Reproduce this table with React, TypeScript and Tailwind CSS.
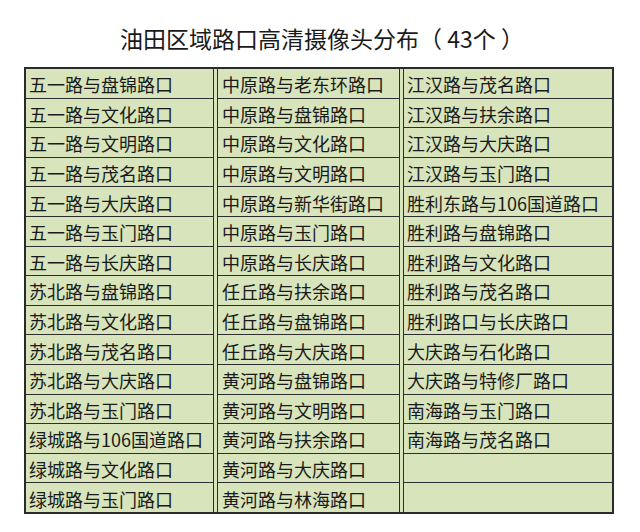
const columns: string[][] = [
  [
    '五一路与盘锦路口',
    '五一路与文化路口',
    '五一路与文明路口',
    '五一路与茂名路口',
    '五一路与大庆路口',
    '五一路与玉门路口',
    '五一路与长庆路口',
    '苏北路与盘锦路口',
    '苏北路与文化路口',
    '苏北路与茂名路口',
    '苏北路与大庆路口',
    '苏北路与玉门路口',
    '绿城路与106国道路口',
    '绿城路与文化路口',
    '绿城路与玉门路口',
  ],
  [
    '中原路与老东环路口',
    '中原路与盘锦路口',
    '中原路与文化路口',
    '中原路与文明路口',
    '中原路与新华街路口',
    '中原路与玉门路口',
    '中原路与长庆路口',
    '任丘路与扶余路口',
    '任丘路与盘锦路口',
    '任丘路与大庆路口',
    '黄河路与盘锦路口',
    '黄河路与文明路口',
    '黄河路与扶余路口',
    '黄河路与大庆路口',
    '黄河路与林海路口',
  ],
  [
    '江汉路与茂名路口',
    '江汉路与扶余路口',
    '江汉路与大庆路口',
    '江汉路与玉门路口',
    '胜利东路与106国道路口',
    '胜利路与盘锦路口',
    '胜利路与文化路口',
    '胜利路与茂名路口',
    '胜利路口与长庆路口',
    '大庆路与石化路口',
    '大庆路与特修厂路口',
    '南海路与玉门路口',
    '南海路与茂名路口',
    '',
    '',
  ],
]

// widths tuned so the double rules between columns land where the sheet has them
const columnStyles = [
  { box: 'w-[188px] border-r border-[#2e2e2e]', cell: 'pl-[3px]' },
  { box: 'w-[183px] border-x border-[#2e2e2e]', cell: 'pl-[4px]' },
  { box: 'flex-1 border-l border-[#2e2e2e]', cell: 'pl-[3px]' },
]

function Column({ items, box, cell }: { items: string[]; box: string; cell: string }) {
  return (
    <div className={`flex flex-col ${box}`}>
      {items.map((name, i) => (
        <div
          key={i}
          className={`flex flex-1 items-center pt-[2px] whitespace-nowrap ${cell} ${
            i < items.length - 1 ? 'border-b border-[#2e2e2e]' : ''
          }`}
        >
          {name}
        </div>
      ))}
    </div>
  )
}

export default function App() {
  return (
    <div
      className="w-[640px] h-[532px] bg-white text-[#1a1a1a]"
      style={{ fontFamily: '"Noto Sans CJK SC", "Noto Sans", sans-serif' }}
    >
      <h1 className="pt-[23px] pl-[4px] text-center text-[23px] leading-[30px] font-normal whitespace-pre [text-spacing-trim:space-all]">
        油田区域路口高清摄像头分布（ 43个 ）
      </h1>

      <div className="mt-[14px] ml-[24px] w-[590px] h-[447px] border-2 border-[#2b2b2b] bg-[#d8e4bc] flex gap-[3px] text-[18px] leading-none">
        {columns.map((items, i) => (
          <Column key={i} items={items} box={columnStyles[i].box} cell={columnStyles[i].cell} />
        ))}
      </div>
    </div>
  )
}
